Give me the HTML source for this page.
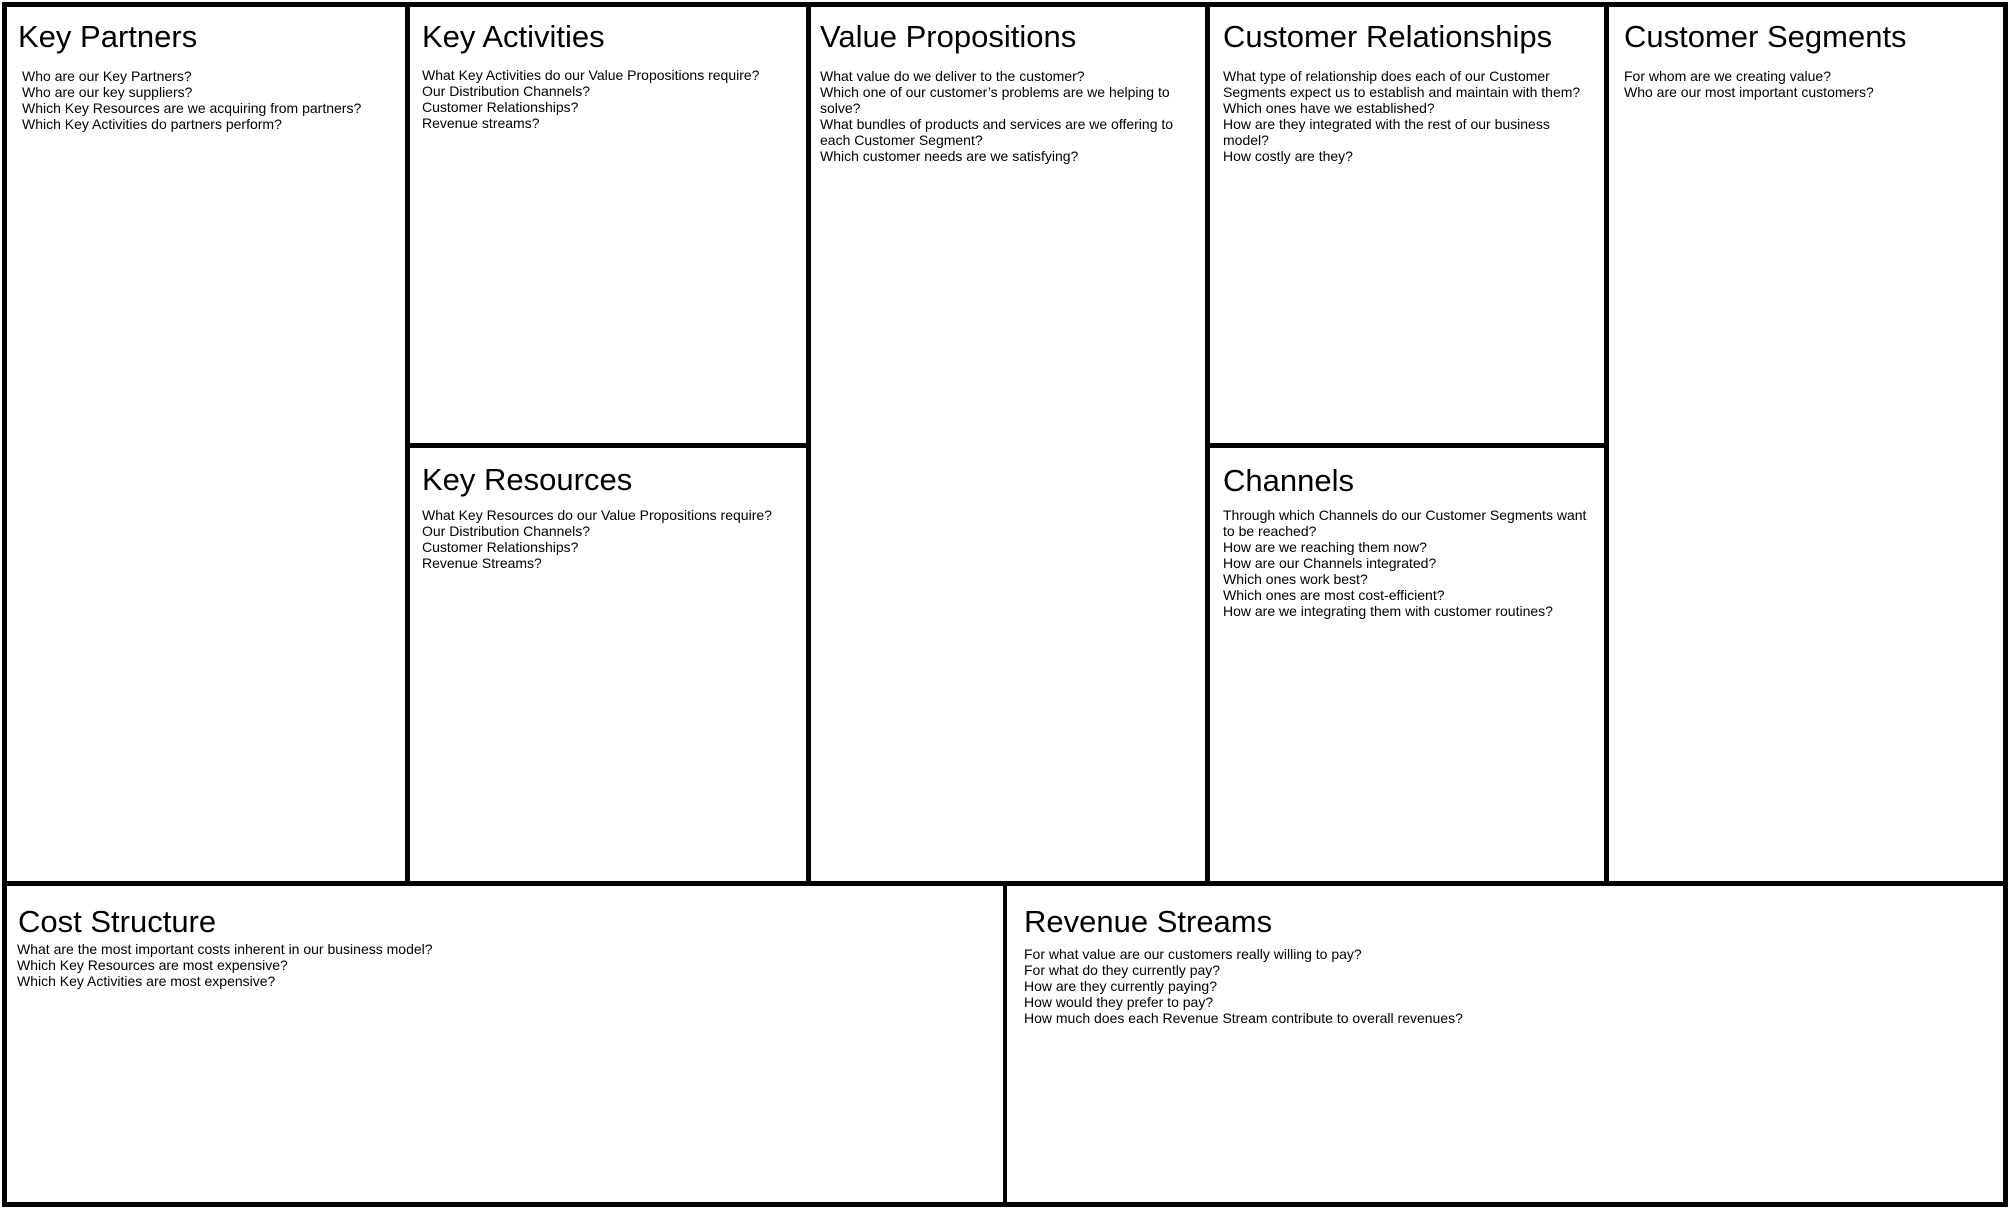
<!DOCTYPE html>
<html><head><meta charset="utf-8"><style>
html,body{margin:0;padding:0;background:#fff;}
body{width:2010px;height:1209px;position:relative;overflow:hidden;font-family:"Liberation Sans",Arial,sans-serif;color:#000;}
.l{position:absolute;background:#000;}
.t{position:absolute;font-size:31px;line-height:31px;white-space:nowrap;}
.q{position:absolute;font-size:14px;line-height:16px;white-space:nowrap;}
</style></head><body>
<div class="l" style="left:2px;top:2px;width:2006px;height:5px"></div>
<div class="l" style="left:2px;top:1202px;width:2006px;height:5px"></div>
<div class="l" style="left:2px;top:2px;width:5px;height:1205px"></div>
<div class="l" style="left:2003px;top:2px;width:5px;height:1205px"></div>
<div class="l" style="left:405px;top:2px;width:5px;height:882px"></div>
<div class="l" style="left:806px;top:2px;width:5px;height:882px"></div>
<div class="l" style="left:1205px;top:2px;width:5px;height:882px"></div>
<div class="l" style="left:1604px;top:2px;width:5px;height:882px"></div>
<div class="l" style="left:2px;top:881px;width:2006px;height:5px"></div>
<div class="l" style="left:405px;top:443px;width:405px;height:5px"></div>
<div class="l" style="left:1205px;top:443px;width:404px;height:5px"></div>
<div class="l" style="left:1003px;top:881px;width:4px;height:326px"></div>

<div class="t" style="left:18px;top:21px">Key Partners</div>
<div class="q" style="left:22px;top:68px">Who are our Key Partners?<br>Who are our key suppliers?<br>Which Key Resources are we acquiring from partners?<br>Which Key Activities do partners perform?</div>

<div class="t" style="left:422px;top:21px">Key Activities</div>
<div class="q" style="left:422px;top:67px">What Key Activities do our Value Propositions require?<br>Our Distribution Channels?<br>Customer Relationships?<br>Revenue streams?</div>

<div class="t" style="left:422px;top:464px">Key Resources</div>
<div class="q" style="left:422px;top:507px">What Key Resources do our Value Propositions require?<br>Our Distribution Channels?<br>Customer Relationships?<br>Revenue Streams?</div>

<div class="t" style="left:820px;top:21px">Value Propositions</div>
<div class="q" style="left:820px;top:68px">What value do we deliver to the customer?<br>Which one of our customer’s problems are we helping to<br>solve?<br>What bundles of products and services are we offering to<br>each Customer Segment?<br>Which customer needs are we satisfying?</div>

<div class="t" style="left:1223px;top:21px">Customer Relationships</div>
<div class="q" style="left:1223px;top:68px">What type of relationship does each of our Customer<br>Segments expect us to establish and maintain with them?<br>Which ones have we established?<br>How are they integrated with the rest of our business<br>model?<br>How costly are they?</div>

<div class="t" style="left:1223px;top:465px">Channels</div>
<div class="q" style="left:1223px;top:507px">Through which Channels do our Customer Segments want<br>to be reached?<br>How are we reaching them now?<br>How are our Channels integrated?<br>Which ones work best?<br>Which ones are most cost-efficient?<br>How are we integrating them with customer routines?</div>

<div class="t" style="left:1624px;top:21px">Customer Segments</div>
<div class="q" style="left:1624px;top:68px">For whom are we creating value?<br>Who are our most important customers?</div>

<div class="t" style="left:18px;top:906px">Cost Structure</div>
<div class="q" style="left:17px;top:941px">What are the most important costs inherent in our business model?<br>Which Key Resources are most expensive?<br>Which Key Activities are most expensive?</div>

<div class="t" style="left:1024px;top:906px">Revenue Streams</div>
<div class="q" style="left:1024px;top:946px">For what value are our customers really willing to pay?<br>For what do they currently pay?<br>How are they currently paying?<br>How would they prefer to pay?<br>How much does each Revenue Stream contribute to overall revenues?</div>
</body></html>
